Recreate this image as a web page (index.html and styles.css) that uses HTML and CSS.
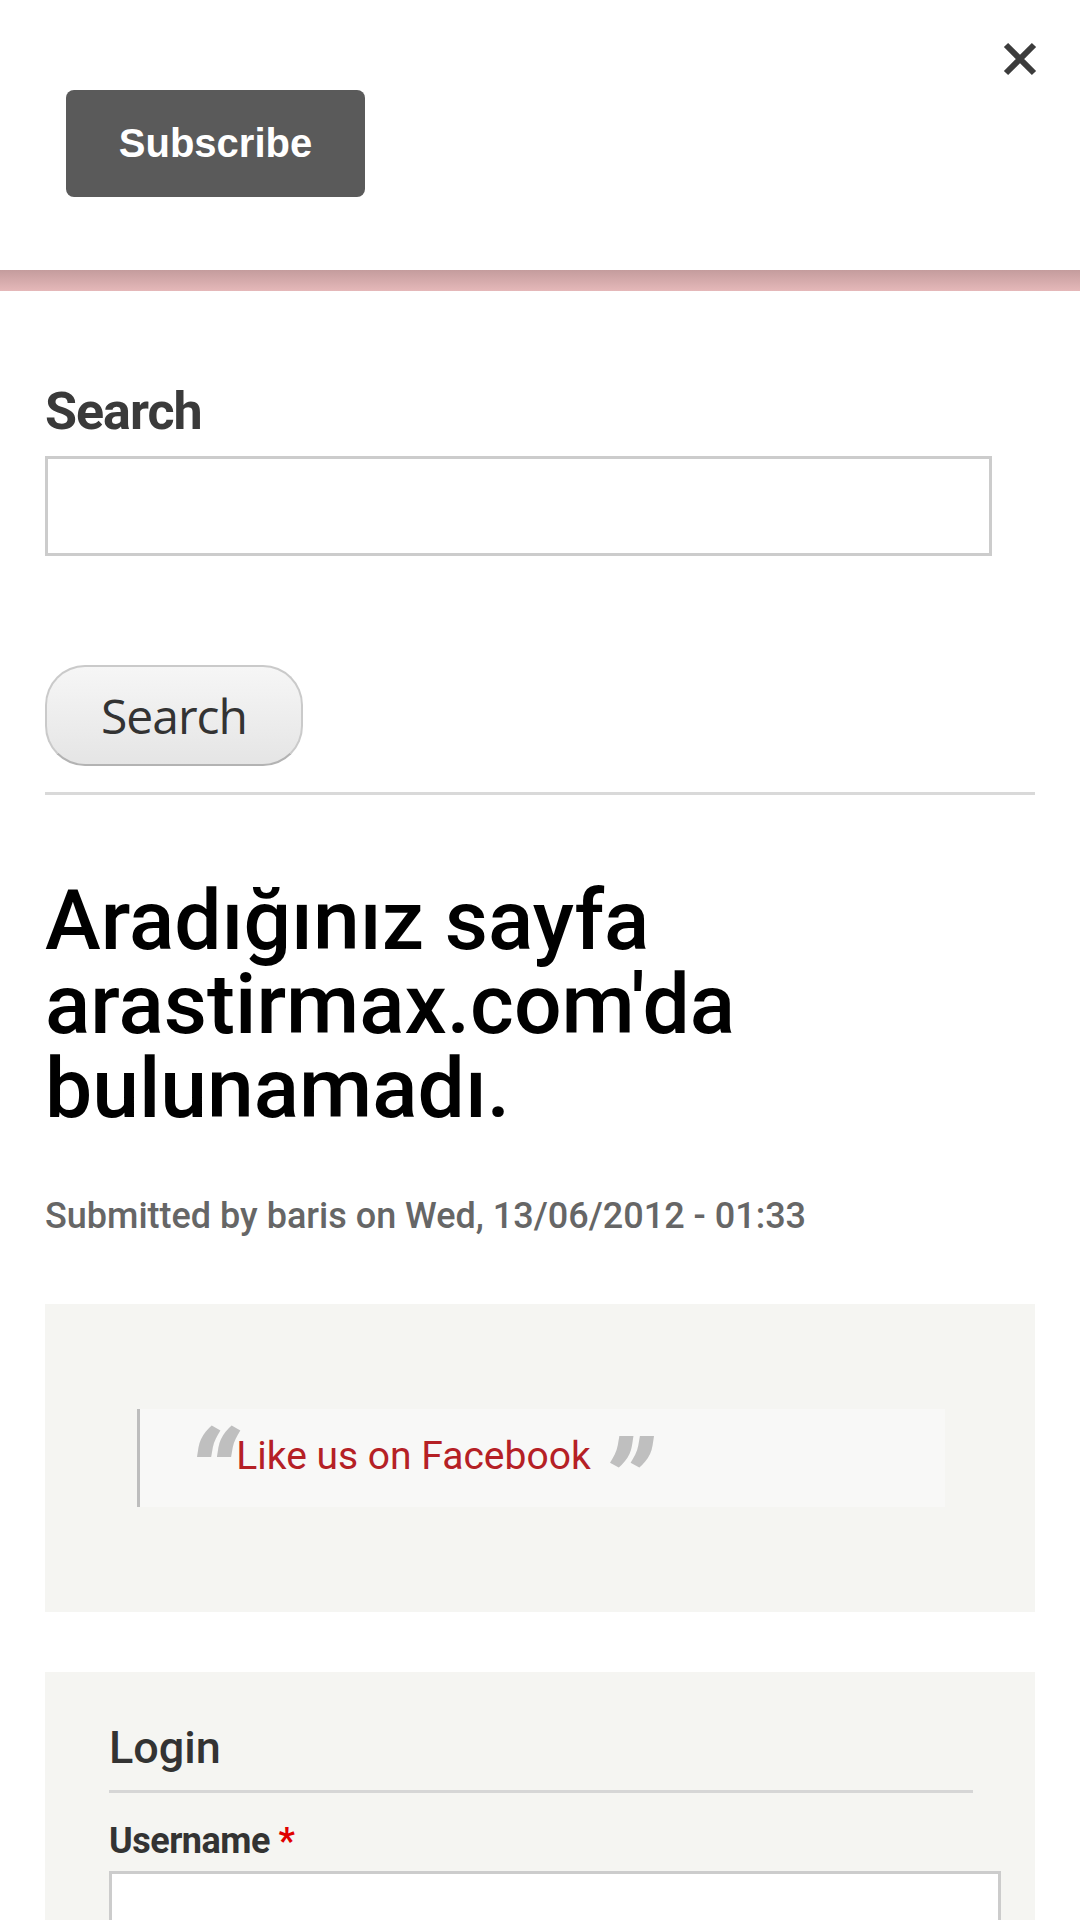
FILE: index.html
```html
<!DOCTYPE html>
<html>
<head>
    <meta name="viewport" content="width=device-width, initial-scale=1.0">
    <title>Aradığınız sayfa arastirmax.com'da bulunamadı.</title>
    <link rel="stylesheet" href="styles.css">
</head>
<body>
    <header class="promo">
        <button class="subscribe">Subscribe</button>
        <button class="close" aria-label="Close">
            <svg width="36" height="36" viewBox="0 0 36 36">
                <path d="M4 4 L32 32 M32 4 L4 32" stroke="#3c3c3c" stroke-width="6" fill="none"/>
            </svg>
        </button>
    </header>
    <div class="promo-shadow"></div>

    <main class="page">
        <section class="search-block">
            <h2>Search</h2>
            <input type="text" class="search-input">
            <button class="search-btn">Search</button>
        </section>

        <hr>

        <article class="node">
            <h1>Aradığınız sayfa arastirmax.com'da bulunamadı.</h1>
            <p class="submitted">Submitted by baris on Wed, 13/06/2012 - 01:33</p>
        </article>

        <div class="block block-facebook">
            <blockquote>
                <span class="q q-open">“</span><a href="#">Like us on Facebook</a> <span class="q q-close">”</span>
            </blockquote>
        </div>

        <div class="block block-login">
            <h3>Login</h3>
            <label>Username <span class="req">*</span></label>
            <input type="text" class="login-input">
        </div>
    </main>
</body>
</html>
```

FILE: styles.css
```css
html,
body {
    margin: 0;
    background: #fff;
    font-family: Roboto, "Noto Sans", sans-serif;
    -webkit-font-smoothing: antialiased;
}

/* promo bar */

.promo {
    position: relative;
    height: 270px;
    box-sizing: border-box;
    padding: 90px 0 0 66px;
    background: #fff;
}

.subscribe {
    width: 299px;
    height: 107px;
    padding: 0;
    border: 0;
    border-radius: 8px;
    background: #5a5a5a;
    color: #fff;
    font: bold 40px "Liberation Sans", Arial, sans-serif;
}

.close {
    position: absolute;
    top: 41px;
    right: 42px;
    width: 36px;
    height: 36px;
    padding: 0;
    border: 0;
    background: none;
}

.close svg {
    display: block;
}

.promo-shadow {
    height: 21px;
    background: linear-gradient(#c49c9d, #e5b8b9);
}

/* content */

.page {
    padding: 0 45px;
}

.search-block h2 {
    margin: 91px 0 0;
    font-size: 52px;
    line-height: 60px;
    font-weight: 700;
    color: #3a3a3a;
    letter-spacing: -1px;
}

.search-input {
    display: block;
    margin-top: 14px;
    width: 947px;
    height: 100px;
    box-sizing: border-box;
    border: 3px solid #ccc;
    background: #fff;
}

.search-btn {
    display: block;
    margin-top: 109px;
    width: 258px;
    height: 101px;
    padding: 0;
    border: 2px solid #cacaca;
    border-bottom-color: #b3b3b3;
    border-radius: 40px;
    background: linear-gradient(#f6f6f6, #e5e5e5);
    color: #333;
    font: 48px "Open Sans", sans-serif;
    letter-spacing: -1px;
}

hr {
    margin: 26px 0 0;
    height: 0;
    border: 0;
    border-top: 3px solid #d9d9d9;
}

.node h1 {
    margin: 84px 0 0;
    font-size: 84px;
    line-height: 84px;
    font-weight: 500;
    color: #000;
}

.submitted {
    margin: 65px 0 0;
    font-size: 36px;
    line-height: 40px;
    font-weight: 500;
    color: #666;
}

.block {
    background: #f5f5f2;
}

.block-facebook {
    margin-top: 68px;
    padding: 105px 90px 105px 92px;
}

blockquote {
    margin: 0;
    height: 98px;
    box-sizing: border-box;
    padding: 25px 0 0 46px;
    border-left: 3px solid #bdbdbd;
    background: #f8f8f7;
    font-size: 39px;
    line-height: 44px;
}

blockquote a {
    color: #b52025;
    text-decoration: none;
}

.q {
    color: #bfbfbf;
    font-size: 120px;
    font-weight: 900;
    font-style: italic;
    line-height: 0;
}

.q-open {
    vertical-align: -49px;
}

.q-close {
    vertical-align: -57px;
}

.block-login {
    margin-top: 60px;
    padding: 50px 62px 40px 64px;
}

.block-login h3 {
    margin: 0;
    padding-bottom: 16px;
    border-bottom: 3px solid #d6d6d6;
    font-size: 45px;
    line-height: 52px;
    font-weight: 500;
    color: #333;
}

.block-login label {
    display: block;
    margin-top: 28px;
    font-size: 36px;
    line-height: 40px;
    font-weight: 700;
    color: #333;
    letter-spacing: -0.5px;
}

.req {
    color: #e00000;
}

.login-input {
    display: block;
    margin-top: 10px;
    width: 892px;
    height: 100px;
    box-sizing: border-box;
    border: 3px solid #ccc;
    background: #fff;
}
```
